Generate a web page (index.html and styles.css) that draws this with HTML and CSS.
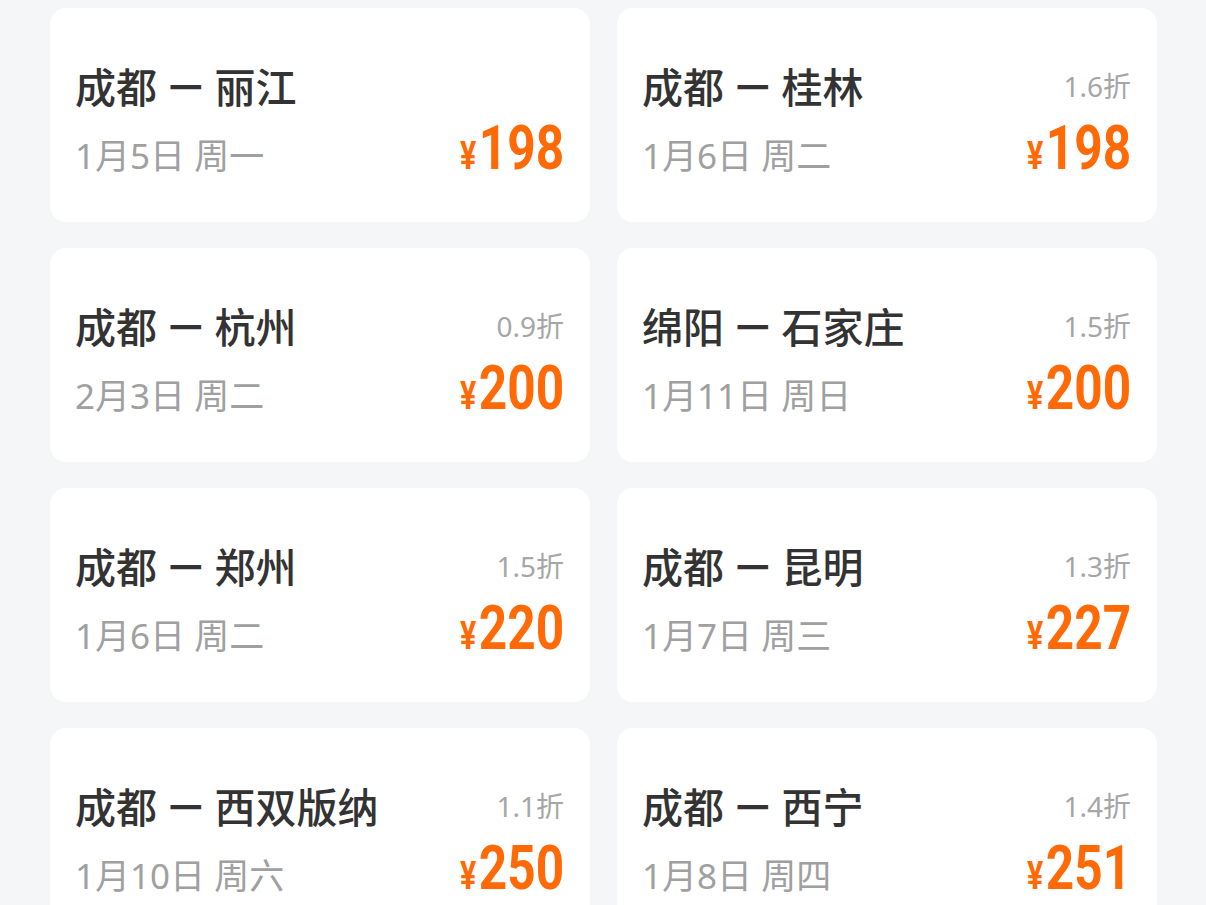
FILE: index.html
```html
<!DOCTYPE html>
<html lang="zh-CN">
<head>
    <meta charset="UTF-8">
    <meta name="viewport" content="width=device-width, initial-scale=1.0">
    <title>特价机票</title>
    <link rel="stylesheet" href="styles.css">
</head>
<body>
    <div class="deal-list">
        <div class="deal-card">
            <div class="deal-top">
                <span class="route">成都 <span class="dash">一</span> 丽江</span>
            </div>
            <div class="deal-bottom">
                <span class="date">1月5日 周一</span>
                <span class="price"><span class="yen">¥</span>198</span>
            </div>
        </div>
        <div class="deal-card">
            <div class="deal-top">
                <span class="route">成都 <span class="dash">一</span> 桂林</span>
                <span class="discount">1.6折</span>
            </div>
            <div class="deal-bottom">
                <span class="date">1月6日 周二</span>
                <span class="price"><span class="yen">¥</span>198</span>
            </div>
        </div>
        <div class="deal-card">
            <div class="deal-top">
                <span class="route">成都 <span class="dash">一</span> 杭州</span>
                <span class="discount">0.9折</span>
            </div>
            <div class="deal-bottom">
                <span class="date">2月3日 周二</span>
                <span class="price"><span class="yen">¥</span>200</span>
            </div>
        </div>
        <div class="deal-card">
            <div class="deal-top">
                <span class="route">绵阳 <span class="dash">一</span> 石家庄</span>
                <span class="discount">1.5折</span>
            </div>
            <div class="deal-bottom">
                <span class="date">1月11日 周日</span>
                <span class="price"><span class="yen">¥</span>200</span>
            </div>
        </div>
        <div class="deal-card">
            <div class="deal-top">
                <span class="route">成都 <span class="dash">一</span> 郑州</span>
                <span class="discount">1.5折</span>
            </div>
            <div class="deal-bottom">
                <span class="date">1月6日 周二</span>
                <span class="price"><span class="yen">¥</span>220</span>
            </div>
        </div>
        <div class="deal-card">
            <div class="deal-top">
                <span class="route">成都 <span class="dash">一</span> 昆明</span>
                <span class="discount">1.3折</span>
            </div>
            <div class="deal-bottom">
                <span class="date">1月7日 周三</span>
                <span class="price"><span class="yen">¥</span>227</span>
            </div>
        </div>
        <div class="deal-card">
            <div class="deal-top">
                <span class="route">成都 <span class="dash">一</span> 西双版纳</span>
                <span class="discount">1.1折</span>
            </div>
            <div class="deal-bottom">
                <span class="date">1月10日 周六</span>
                <span class="price"><span class="yen">¥</span>250</span>
            </div>
        </div>
        <div class="deal-card">
            <div class="deal-top">
                <span class="route">成都 <span class="dash">一</span> 西宁</span>
                <span class="discount">1.4折</span>
            </div>
            <div class="deal-bottom">
                <span class="date">1月8日 周四</span>
                <span class="price"><span class="yen">¥</span>251</span>
            </div>
        </div>
    </div>
</body>
</html>
```

FILE: styles.css
```css
body {
    margin: 0;
    background-color: #f5f6f8;
    font-family: "Noto Sans CJK SC", "Noto Sans", sans-serif;
    height: 905px;
    overflow: hidden;
}
.deal-list {
    display: grid;
    grid-template-columns: 540px 540px;
    gap: 26px 27px;
    padding: 8px 49px 0 50px;
}
.deal-card {
    background-color: #fff;
    border-radius: 16px;
    height: 214px;
    box-sizing: border-box;
    padding: 53px 26px 0 25px;
}
.deal-top {
    display: flex;
    justify-content: space-between;
    align-items: center;
    height: 48px;
}
.route {
    font-size: 41px;
    font-weight: 500;
    color: #333;
    line-height: 48px;
}
.route .dash {
    font-size: 33px;
    font-weight: 700;
    margin: 0 3px;
    vertical-align: 3px;
}
.discount {
    font-size: 28px;
    color: #a6a6a6;
    font-family: "Noto Sans", "Noto Sans CJK SC", sans-serif;
}
.deal-bottom {
    display: flex;
    justify-content: space-between;
    align-items: baseline;
    margin-top: 9px;
}
.date {
    font-size: 35px;
    color: #a0a0a0;
    font-family: "Noto Sans", "Noto Sans CJK SC", sans-serif;
}
.price {
    display: inline-block;
    font-family: Roboto, "Noto Sans", sans-serif;
    font-weight: 700;
    font-size: 62px;
    line-height: 60px;
    color: #ff6a07;
    transform: scaleX(0.8);
    transform-origin: right center;
}
.price .yen {
    font-size: 38px;
    margin-right: 3px;
}
```
